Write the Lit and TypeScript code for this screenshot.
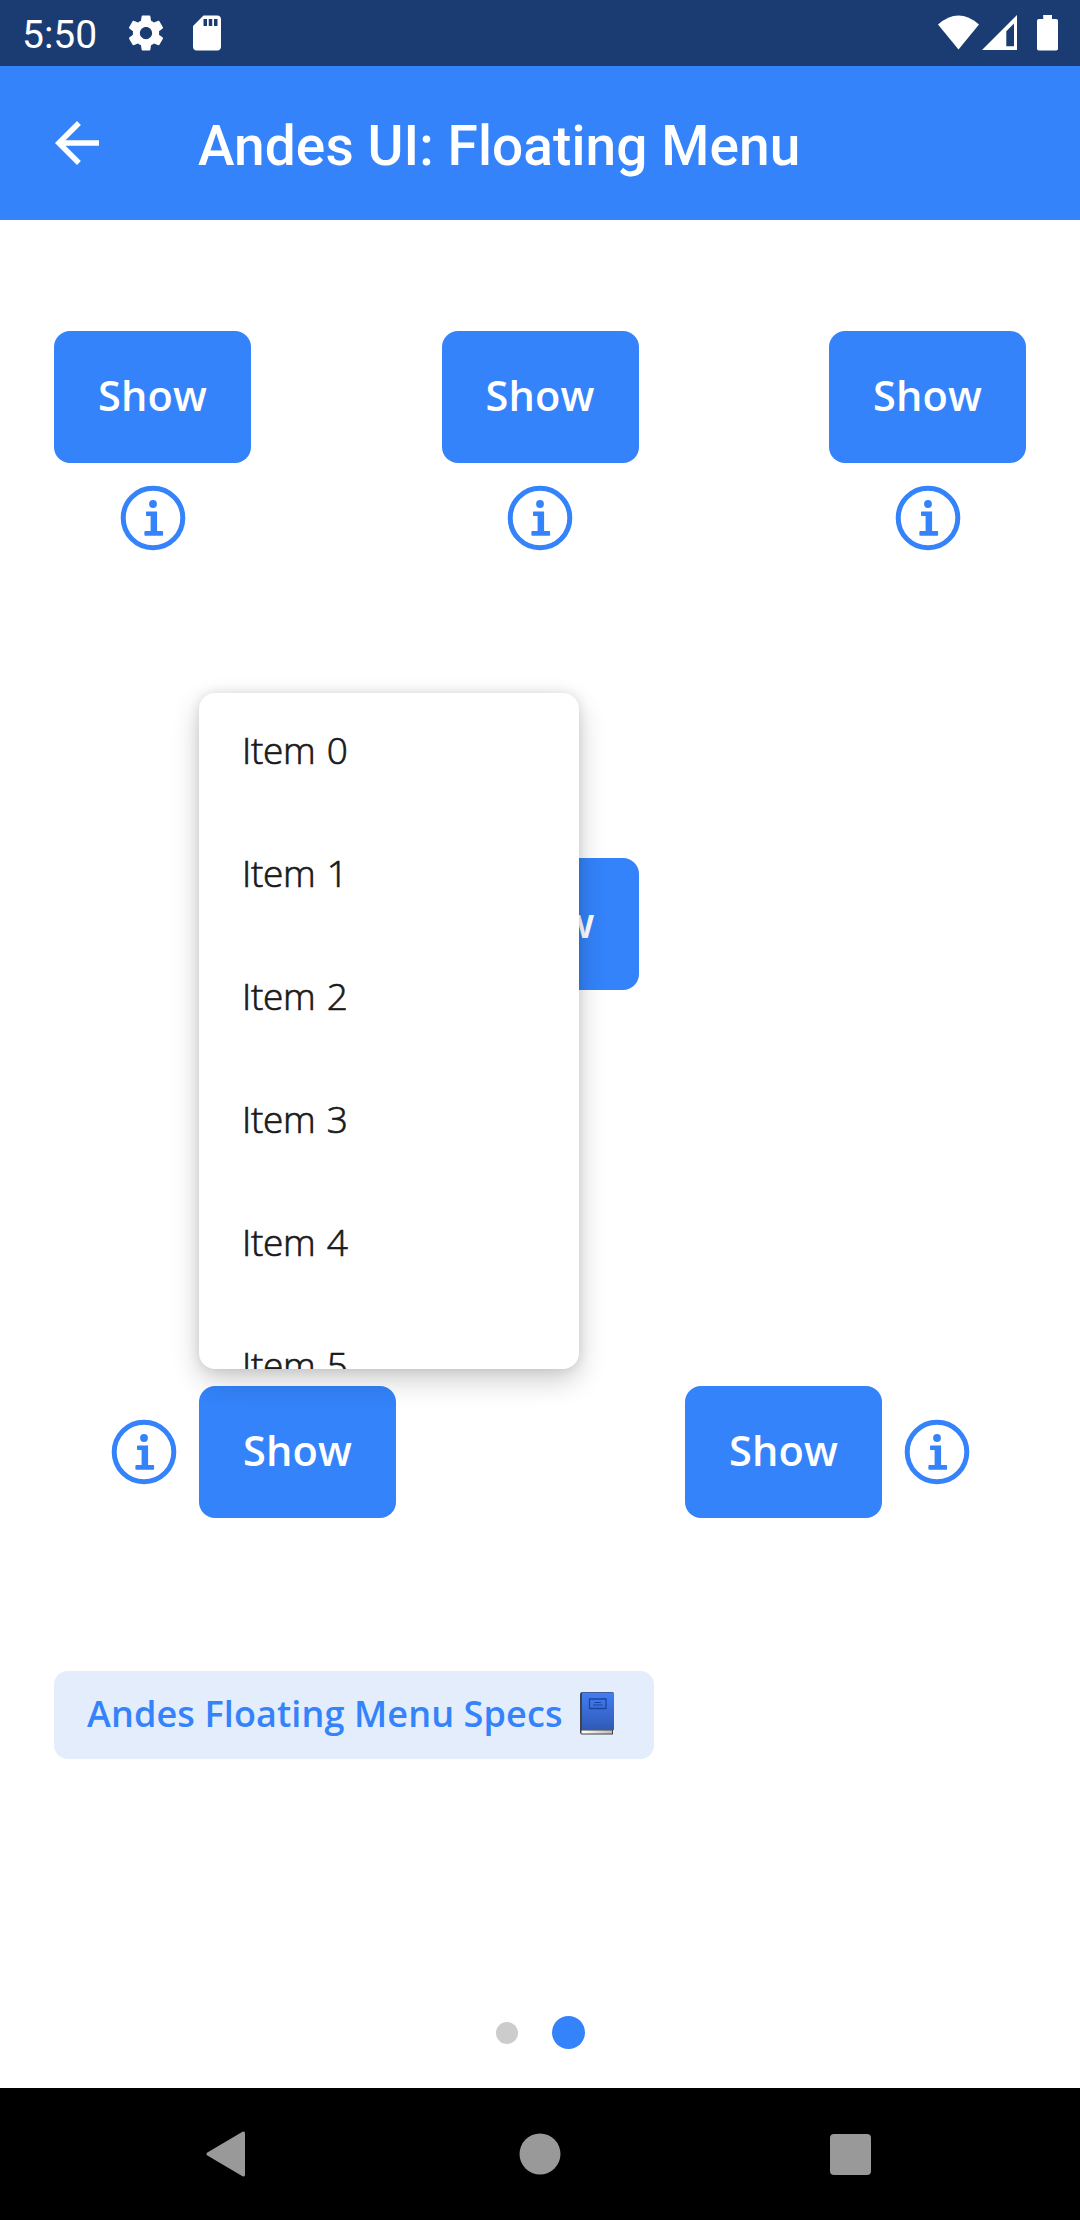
import { LitElement, html, css, svg } from "lit";
import { customElement, property } from "lit/decorators.js";

@customElement("info-icon")
class InfoIcon extends LitElement {
  static styles = css`
    :host { display: block; width: 66px; height: 66px; flex: none; }
    svg { display: block; }
  `;
  render() {
    return html`<svg width="66" height="66" viewBox="0 0 66 66" fill="#3483fa">
      <circle cx="33" cy="33" r="29.8" fill="none" stroke="#3483fa" stroke-width="5" />
      <circle cx="33" cy="19" r="3.9" />
      <path d="M26.8 26.5h10.3v19.6h5.2a.8.8 0 0 1 .8.8v3a.8.8 0 0 1-.8.8H25.200a.8.8 0 0 1-.8-.8v-3a.8.8 0 0 1 .8-.8h5.400V31.100h-3.800a.8.8 0 0 1-.8-.8v-3a.8.8 0 0 1 .8-.8z" />
    </svg>`;
  }
}

@customElement("andes-button")
class AndesButton extends LitElement {
  @property() label = "Show";
  static styles = css`
    :host { display: block; flex: none; }
    .button {
      display: flex; align-items: center; justify-content: center;
      box-sizing: border-box; width: 197px; height: 132px; padding: 0 0 5px;
      border: 0; border-radius: 16px; background: #3483fa; color: #fff;
      font: 600 41.5px/50px "Open Sans", sans-serif; letter-spacing: 0.2px;
    }
  `;
  render() {
    return html`<button class="button">${this.label}</button>`;
  }
}

@customElement("floating-menu")
class FloatingMenu extends LitElement {
  @property({ attribute: false }) items: string[] = [];
  static styles = css`
    :host { display: block; }
    .menu {
      margin: 0; padding: 0; list-style: none; box-sizing: border-box;
      width: 380px; height: 676px; overflow: hidden; border-radius: 16px; background: #fff;
      box-shadow: 0 11px 28px rgba(0, 0, 0, 0.2), 0 0 12px rgba(0, 0, 0, 0.1);
    }
    .item {
      display: flex; align-items: center; box-sizing: border-box; height: 123px;
      padding: 0 44px 9px 43px; color: #1a1a1a;
      font: 300 37px/50px "Open Sans", sans-serif; letter-spacing: -0.3px; word-spacing: 2px;
      -webkit-text-stroke: 0.7px #1a1a1a;
    }
  `;
  render() {
    return html`<ul class="menu">${this.items.map((i) => html`<li class="item">${i}</li>`)}</ul>`;
  }
}

const statusIcons = {
  gear: svg`<path fill-rule="evenodd" d="M19.43 12.98c.04-.32.07-.64.07-.98s-.03-.66-.07-.98l2.11-1.65c.19-.15.24-.42.12-.64l-2-3.46c-.12-.22-.39-.3-.61-.22l-2.49 1c-.52-.4-1.08-.73-1.69-.98l-.38-2.65C14.46 2.18 14.25 2 14 2h-4c-.25 0-.46.18-.49.42l-.38 2.65c-.61.25-1.17.59-1.69.98l-2.49-1c-.23-.09-.49 0-.61.22l-2 3.46c-.13.22-.07.49.12.64l2.11 1.65c-.04.32-.07.65-.07.98s.03.66.07.98l-2.11 1.65c-.19.15-.24.42-.12.64l2 3.46c.12.22.39.3.61.22l2.49-1c.52.4 1.08.73 1.69.98l.38 2.65c.03.24.24.42.49.42h4c.25 0 .46-.18.49-.42l.38-2.65c.61-.25 1.17-.59 1.69-.98l2.49 1c.23.09.49 0 .61-.22l2-3.46c.12-.22.07-.49-.12-.64l-2.11-1.65zM12 15.5c-1.93 0-3.5-1.57-3.5-3.5s1.57-3.5 3.5-3.5 3.5 1.57 3.5 3.5-1.57 3.5-3.5 3.5z"/>`,
  card: svg`<path d="M18 2h-8L4.02 8 4 20c0 1.1.9 2 2 2h12c1.1 0 2-.9 2-2V4c0-1.1-.9-2-2-2zm-6 6h-2V4h2v4zm3 0h-2V4h2v4zm3 0h-2V4h2v4z"/>`,
};

@customElement("app-root")
class AppRoot extends LitElement {
  static styles = css`
    :host {
      display: flex; flex-direction: column; width: 1080px; height: 2220px;
      overflow: hidden; background: #fff; font-family: Roboto, sans-serif;
    }
    svg { display: block; flex: none; }
    .status {
      display: flex; align-items: center; justify-content: space-between; box-sizing: border-box;
      height: 66px; padding: 0 22px; background: #1a3c73; color: #fff; fill: #fff;
    }
    .status-left { display: flex; align-items: center; }
    .time { width: 103px; font: 400 39px/46px Roboto, sans-serif; padding-top: 3px; }
    .gear { margin-right: 19px; }
    .appbar {
      display: flex; align-items: center; box-sizing: border-box; height: 154px;
      padding: 0 44px; background: #3483fa; color: #fff;
    }
    .title {
      margin: 0; padding: 5px 0 0 88px; font: 500 55px/64px Roboto, sans-serif;
      letter-spacing: 0.08px; white-space: nowrap;
    }
    .content {
      display: flex; flex-direction: column; box-sizing: border-box; flex: 1;
      padding: 111px 54px 39px;
    }
    .row { display: flex; }
    .top { justify-content: space-between; }
    .stack { display: flex; flex-direction: column; align-items: center; gap: 22px; }
    .middle { justify-content: center; margin-top: 307px; }
    .bottom { margin-top: 396px; align-items: center; justify-content: space-between; padding: 0 56px 0 57px; }
    .pair { position: relative; display: flex; align-items: center; gap: 22px; }
    .popup { position: absolute; left: 88px; bottom: 149px; z-index: 1; }
    .specs {
      display: flex; align-items: center; align-self: flex-start; box-sizing: border-box;
      width: 600px; height: 88px; margin-top: 153px; padding: 0 33px 3px; border: 0; border-radius: 14px;
      background: #e3edfb; color: #3483fa; font: 600 36px/50px "Open Sans", sans-serif;
      letter-spacing: 0.12px; white-space: nowrap;
    }
    .specs-label { width: 493px; text-align: left; }
    .dots { display: flex; align-items: center; justify-content: center; gap: 34px; margin-top: auto; }
    .dot { width: 22px; height: 22px; border-radius: 50%; background: #ccc; }
    .dot-active { width: 33px; height: 33px; background: #3483fa; }
    .nav {
      display: flex; align-items: center; justify-content: space-between; box-sizing: border-box;
      height: 132px; padding: 0 205px; background: #000; fill: #999;
    }
  `;

  private stack() {
    return html`<div class="stack"><andes-button></andes-button><info-icon></info-icon></div>`;
  }

  render() {
    const items = Array.from({ length: 6 }, (_, i) => `Item ${i}`);
    return html`
      <header class="status">
        <div class="status-left">
          <span class="time">5:50</span>
          <svg class="gear" width="42" height="42" viewBox="0 0 24 24">${statusIcons.gear}</svg>
          <svg width="42" height="42" viewBox="0 0 24 24">${statusIcons.card}</svg>
        </div>
        <svg width="120" height="36" viewBox="0 0 120 36">
          <path d="M0 9.6Q20.5-8.4 41 9.6L20.5 34.6z" />
          <path fill-rule="evenodd" d="M79 0V35H44zM76 8.6L68.3 16.3V31.3H76z" />
          <path d="M105.2 0h8.8v4h4.2a1.8 1.8 0 0 1 1.8 1.8v28a1.8 1.8 0 0 1-1.8 1.8H100.8a1.8 1.8 0 0 1-1.8-1.8v-28a1.8 1.8 0 0 1 1.8-1.8h4.4z" />
        </svg>
      </header>
      <div class="appbar">
        <svg width="66" height="66" viewBox="0 0 24 24" fill="#fff">
          <path d="M20 11H7.83l5.59-5.59L12 4l-8 8 8 8 1.41-1.41L7.83 13H20v-2z" />
        </svg>
        <h1 class="title">Andes UI: Floating Menu</h1>
      </div>
      <main class="content">
        <div class="row top">${this.stack()}${this.stack()}${this.stack()}</div>
        <div class="row middle"><andes-button></andes-button></div>
        <div class="row bottom">
          <div class="pair">
            <info-icon></info-icon><andes-button></andes-button>
            <floating-menu class="popup" .items=${items}></floating-menu>
          </div>
          <div class="pair"><andes-button></andes-button><info-icon></info-icon></div>
        </div>
        <button class="specs">
          <span class="specs-label">Andes Floating Menu Specs</span>
          <svg width="34" height="43" viewBox="0 0 34 43">
            <defs>
              <linearGradient id="cover" x1="0" y1="0" x2="0" y2="1">
                <stop offset="0" stop-color="#437df5" /><stop offset="1" stop-color="#3059b5" />
              </linearGradient>
              <linearGradient id="pages" x1="0" y1="0" x2="1" y2="0">
                <stop offset="0" stop-color="#fff" /><stop offset="1" stop-color="#bdbdbd" />
              </linearGradient>
            </defs>
            <path d="M1.5 0H33v42.5H1.5L0 41V1.5z" fill="#424242" />
            <path d="M1.5 38.5H32v3H1.5z" fill="url(#pages)" />
            <path d="M2 .5H34V38H2z" fill="url(#cover)" />
            <path d="M9.5 7H26v9.5H9.5z" fill="none" stroke="#1b469b" stroke-width="1.3" />
            <path d="M14.5 10.5h6.5M13 13h9.5" stroke="#1b469b" stroke-width="1.2" />
          </svg>
        </button>
        <div class="dots"><span class="dot"></span><span class="dot dot-active"></span></div>
      </main>
      <nav class="nav">
        <svg width="46" height="46" viewBox="0 0 46 46"><path d="M2.8 21.2L37.5.8Q40 -.5 40 2.5V43.5Q40 46.5 37.5 45.2L2.8 24.8Q0 23 2.8 21.2z" /></svg>
        <svg width="42" height="42" viewBox="0 0 42 42"><circle cx="21" cy="21" r="20.5" /></svg>
        <svg width="46" height="42" viewBox="0 0 46 42"><rect x="1" y="1" width="41" height="41" rx="4" /></svg>
      </nav>
    `;
  }
}
